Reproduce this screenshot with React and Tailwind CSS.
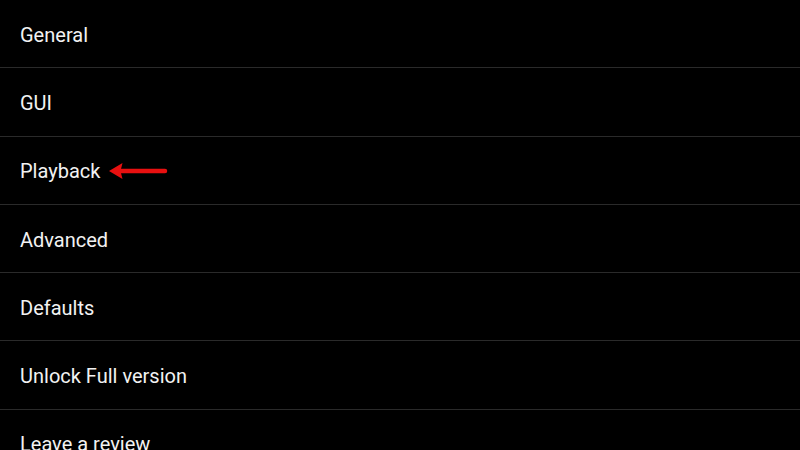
import React from "react"

const items = [
  "General",
  "GUI",
  "Playback",
  "Advanced",
  "Defaults",
  "Unlock Full version",
  "Leave a review",
]

const Arrow = () => (
  <svg width="60" height="18" viewBox="0 0 60 18" className="ml-[8px]">
    <line x1="12" y1="9" x2="57" y2="9" stroke="#e81010" strokeWidth="4.5" strokeLinecap="round" />
    <path d="M1 9 L14.5 1 L12.5 9 L14.5 17 Z" fill="#e81010" />
  </svg>
)

const App = () => {
  return (
    <div className="w-[800px] h-[450px] overflow-hidden bg-black" style={{ fontFamily: "Roboto, 'Liberation Sans', sans-serif" }}>
      {items.map((item, i) => (
        <div
          key={item}
          className="h-[68.3px] flex items-center pl-[20px] pt-[2px] border-b border-[#2a2a2a] text-[#f2f2f2] text-[20px]"
        >
          <span>{item}</span>
          {i === 2 && <Arrow />}
        </div>
      ))}
    </div>
  )
}

export default App
